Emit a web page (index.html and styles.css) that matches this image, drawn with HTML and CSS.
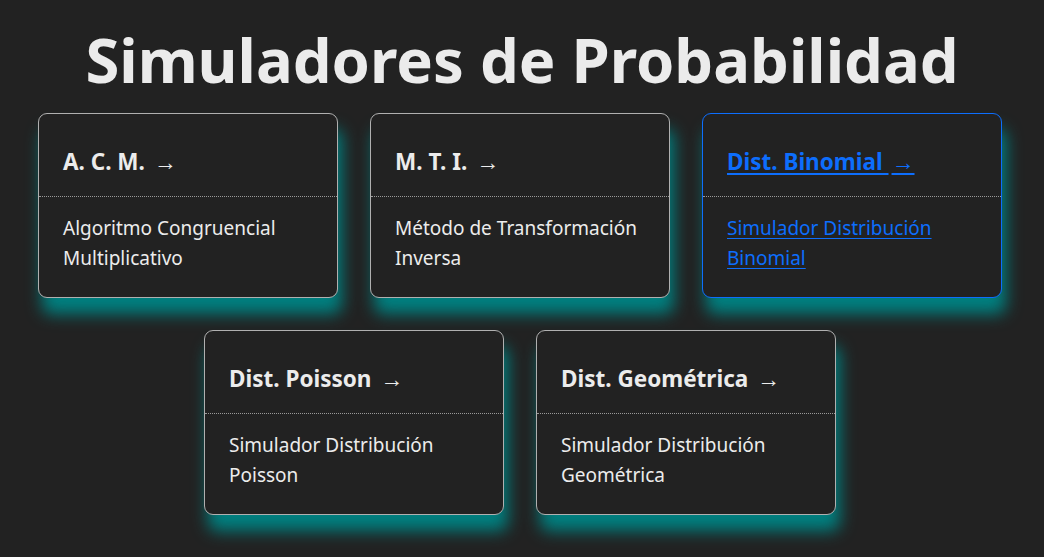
FILE: index.html
```html
<!DOCTYPE html>
<html lang="es">
<head>
<meta charset="utf-8">
<title>Simuladores de Probabilidad</title>
<link rel="stylesheet" href="styles.css">
</head>
<body>
<h1 class="title">Simuladores de Probabilidad</h1>
<main class="grid">
  <a class="card" href="#">
    <div class="card-head"><h2>A. C. M. <span class="arrow">→</span></h2></div>
    <div class="card-body"><p>Algoritmo Congruencial Multiplicativo</p></div>
  </a>
  <a class="card" href="#">
    <div class="card-head"><h2>M. T. I. <span class="arrow">→</span></h2></div>
    <div class="card-body"><p>Método de Transformación Inversa</p></div>
  </a>
  <a class="card card-active" href="#">
    <div class="card-head"><h2>Dist. Binomial <span class="arrow">→</span></h2></div>
    <div class="card-body"><p>Simulador Distribución Binomial</p></div>
  </a>
  <a class="card" href="#">
    <div class="card-head"><h2>Dist. Poisson <span class="arrow">→</span></h2></div>
    <div class="card-body"><p>Simulador Distribución Poisson</p></div>
  </a>
  <a class="card" href="#">
    <div class="card-head"><h2>Dist. Geométrica <span class="arrow">→</span></h2></div>
    <div class="card-body"><p>Simulador Distribución Geométrica</p></div>
  </a>
</main>
</body>
</html>
```
FILE: styles.css
```css
html, body {
  margin: 0;
  padding: 0;
}
body {
  background: #222222;
  color: #ececec;
  font-family: "Noto Sans", "Open Sans", sans-serif;
  width: 1044px;
  height: 557px;
  overflow: hidden;
}
.title {
  margin: 0;
  padding-top: 21px;
  text-align: center;
  font-size: 61.5px;
  line-height: 76px;
  font-weight: 700;
  color: #ebebeb;
  letter-spacing: 0;
}
.grid {
  display: flex;
  flex-wrap: wrap;
  justify-content: center;
  gap: 32px 32px;
  width: 964px;
  margin: 16px 0 0 38px;
}
.card {
  display: block;
  box-sizing: border-box;
  width: 300px;
  height: 185px;
  border: 1px solid #b0b0b0;
  border-radius: 9px;
  background: #222222;
  color: #ececec;
  text-decoration: none;
  box-shadow: 4px 16px 16px #008080;
}
.card-head {
  padding: 34px 24px 0;
  height: 83px;
  box-sizing: border-box;
  border-bottom: 1px dotted #9a9a9a;
}
.card-head h2 {
  margin: 0;
  font-size: 22.5px;
  line-height: 26px;
  font-weight: 700;
}
.arrow {
  font-weight: 400;
  font-size: 23px;
  margin-left: 3px;
}
.card-body {
  padding: 16px 24px 0;
}
.card-body p {
  margin: 0;
  font-size: 19px;
  line-height: 30px;
}
.card-active {
  border-color: #0d6efd;
  color: #0d6efd;
}
.card-active h2,
.card-active p {
  text-decoration: underline;
  text-underline-offset: 3px;
  text-decoration-thickness: 2px;
}
.card-active p {
  text-decoration-thickness: 1px;
}
```
